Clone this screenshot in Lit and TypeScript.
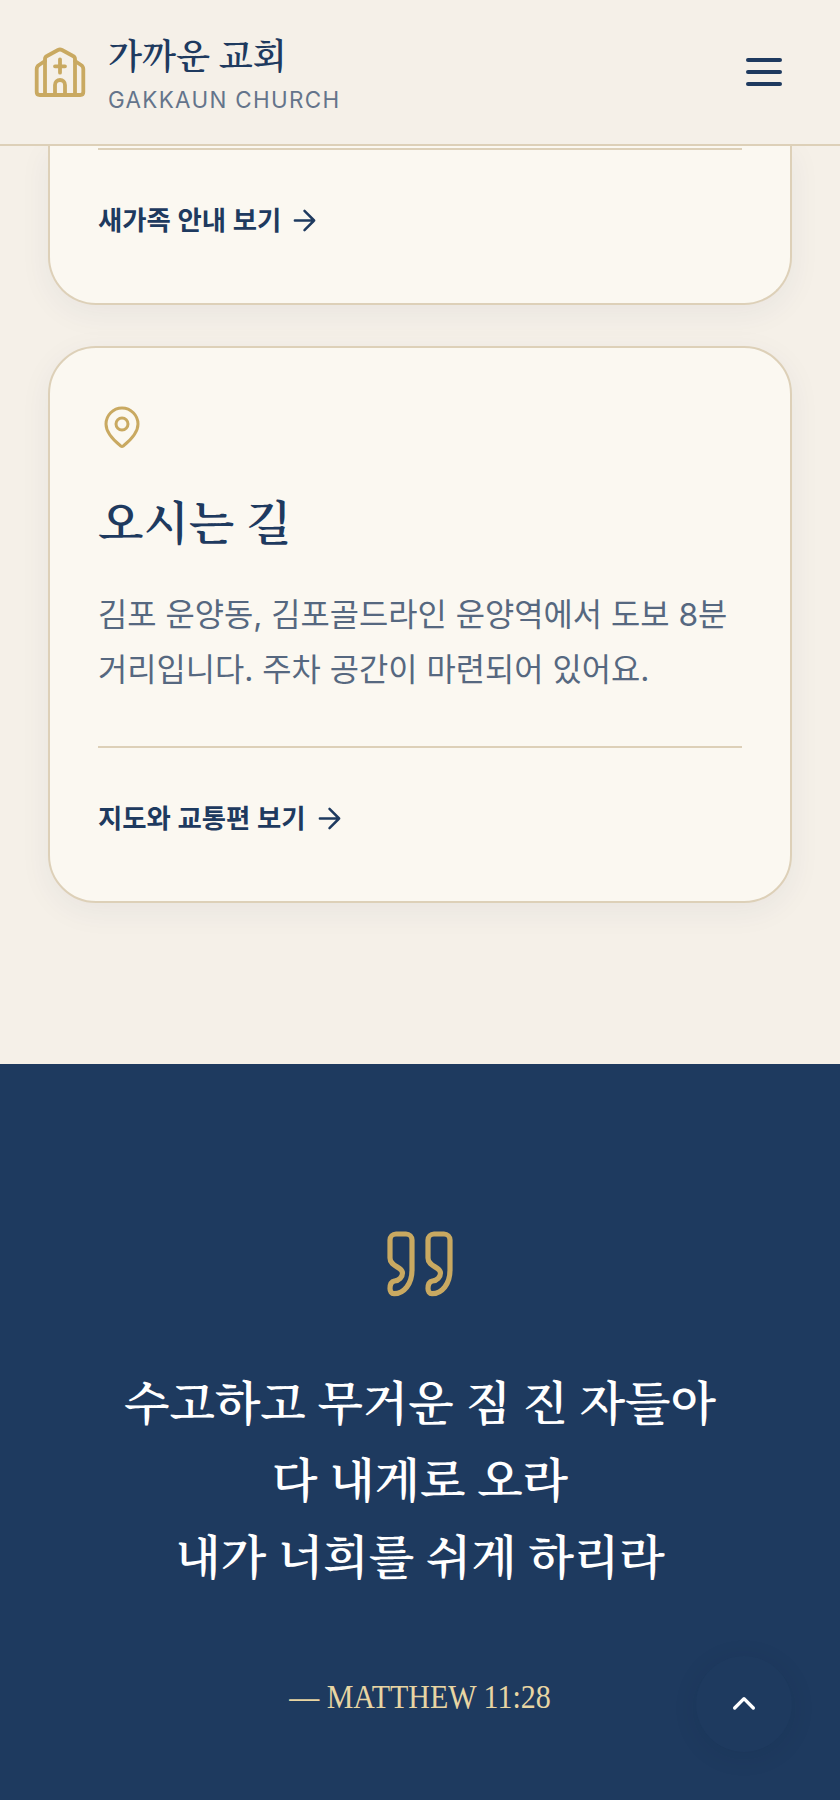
import { LitElement, html, css } from "lit";
import { customElement } from "lit/decorators.js";

const SERIF = css`"Liberation Serif", "Noto Serif CJK KR", "Noto Serif KR", serif`;

@customElement("app-root")
export class AppRoot extends LitElement {
  static styles = css`
    :host { display: block; width: 840px; height: 1800px; overflow: hidden; position: relative; background: #f5f0e8; font-family: "Inter", "Noto Sans CJK KR", sans-serif; }
    * { box-sizing: border-box; }
    .header { height: 146px; background: #f5f0e8; border-bottom: 2px solid #ddd0b8; display: flex; align-items: center; justify-content: space-between; padding: 0 58px 0 30px; position: relative; z-index: 2; }
    .brand { display: flex; align-items: center; gap: 18px; }
    .brand svg { width: 60px; height: 60px; display: block; }
    .brand-text { display: flex; flex-direction: column; gap: 3px; padding-top: 3px; }
    .brand-name { font-family: ${SERIF}; font-weight: 600; font-size: 35.2px; line-height: 50px; color: #1e3a5f; }
    .brand-sub { font-size: 22.4px; line-height: 28px; letter-spacing: 1.34px; color: #64748b; }
    .menu { width: 36px; display: flex; flex-direction: column; gap: 8px; }
    .menu span { height: 4px; border-radius: 2px; background: #1e3a5f; display: block; }
    .main { height: 918px; padding: 0 48px; display: flex; flex-direction: column; gap: 41px; background: #f5f0e8; }
    .card { background: #fbf8f1; border: 2px solid #ddd0b8; border-radius: 48px; padding: 56px 48px 65px; box-shadow: 0 8px 32px rgba(30,58,95,.06); }
    .card.cut { border-top: 0; border-radius: 0 0 48px 48px; padding-top: 2px; height: 159px; flex: none; }
    .icon { width: 48px; height: 48px; display: block; }
    h2 { font-family: ${SERIF}; font-weight: 600; font-size: 47px; line-height: 66px; margin: 39px 0 30px; color: #1e3a5f; }
    p { margin: 0; font-size: 31.8px; line-height: 55px; color: #566880; }
    .divider { border-top: 2px solid #ddd0b8; }
    .card .divider.body { margin-top: 49px; }
    .link { display: flex; align-items: center; gap: 7px; margin-top: 52px; font-size: 26.4px; line-height: 36px; font-weight: 600; color: #1e3a5f; }
    .link svg { width: 33px; height: 33px; display: block; }
    .verse { height: 736px; background: #1e3a5f; display: flex; flex-direction: column; align-items: center; padding-top: 164px; }
    .verse svg { width: 72px; height: 72px; display: block; transform: translateX(1px); }
    .lines { margin-top: 66px; font-family: ${SERIF}; font-weight: 600; font-size: 47px; line-height: 76.8px; color: #fff; text-align: center; }
    .cite { margin-top: 79px; font-family: ${SERIF}; font-size: 30px; line-height: 44px; color: #e8d5a3; transform: scaleY(1.15); }
    .top { position: absolute; left: 696px; top: 1656px; width: 96px; height: 96px; border-radius: 50%; background: #1e3a5f; box-shadow: 0 4px 24px rgba(10,25,50,.1); display: flex; align-items: center; justify-content: center; }
    .top svg { width: 32px; height: 32px; display: block; }
  `;

  arrow() {
    return html`<svg viewBox="0 0 24 24" fill="none" stroke="#1e3a5f" stroke-width="1.8" stroke-linecap="round" stroke-linejoin="round"><path d="M5 12h14M12 5l7 7-7 7"/></svg>`;
  }

  render() {
    return html`
      <div class="header">
        <div class="brand">
          <svg viewBox="0 0 60 60" fill="none" stroke="#c9a961" stroke-width="3.800" stroke-linecap="round" stroke-linejoin="round">
            <path d="M15 53V17Q15 15 17 14L28 8Q30 7 32 8L43 14Q45 15 45 17V53"/>
            <path d="M15 19L9 23Q6.700 24.500 6.700 27V50Q6.700 53 9.700 53H50.300Q53.300 53 53.300 50V27Q53.300 24.500 51 23L45 19"/>
            <path d="M25 53V43a5 5 0 0 1 10 0V53M30 17.300V30.700M25 24.300H35"/>
          </svg>
          <div class="brand-text">
            <div class="brand-name">가까운 교회</div>
            <div class="brand-sub">GAKKAUN CHURCH</div>
          </div>
        </div>
        <div class="menu"><span></span><span></span><span></span></div>
      </div>
      <div class="main">
        <div class="card cut">
          <div class="divider"></div>
          <div class="link">새가족 안내 보기 ${this.arrow()}</div>
        </div>
        <div class="card">
          <svg class="icon" viewBox="0 0 24 24" fill="none" stroke="#c9a961" stroke-width="1.500" stroke-linecap="round" stroke-linejoin="round">
            <path d="M20 10c0 5-5.500 9.500-7.400 11a1 1 0 0 1-1.200 0C9.500 19.500 4 15 4 10a8 8 0 0 1 16 0Z"/>
            <circle cx="12" cy="10" r="3"/>
          </svg>
          <h2>오시는 길</h2>
          <p>김포 운양동, 김포골드라인 운양역에서 도보 8분<br>거리입니다. 주차 공간이 마련되어 있어요.</p>
          <div class="divider body"></div>
          <div class="link">지도와 교통편 보기 ${this.arrow()}</div>
        </div>
      </div>
      <div class="verse">
        <svg viewBox="0 0 72 72" fill="none" stroke="#c9a961" stroke-width="5.200" stroke-linecap="round" stroke-linejoin="round">
          <path d="M5 12a6 6 0 0 1 6-6H21a6 6 0 0 1 6 6V42C27 56 19 65.700 9 65.700C6.500 65.700 5 63.500 5 60.500C5 55.500 7 53.500 9.500 53C14 52.500 17.500 49 17.500 45C17.500 38.500 5 39 5 30Z"/>
          <path d="M43 12a6 6 0 0 1 6-6H59a6 6 0 0 1 6 6V42C65 56 57 65.700 47 65.700C44.500 65.700 43 63.500 43 60.500C43 55.500 45 53.500 47.500 53C52 52.500 55.500 49 55.500 45C55.500 38.500 43 39 43 30Z"/>
        </svg>
        <div class="lines">수고하고 무거운 짐 진 자들아<br>다 내게로 오라<br>내가 너희를 쉬게 하리라</div>
        <div class="cite">— MATTHEW 11:28</div>
      </div>
      <div class="top">
        <svg viewBox="0 0 24 24" fill="none" stroke="#fff" stroke-width="2.500" stroke-linecap="round" stroke-linejoin="round"><path d="M5 15l7-7 7 7"/></svg>
      </div>
    `;
  }
}
